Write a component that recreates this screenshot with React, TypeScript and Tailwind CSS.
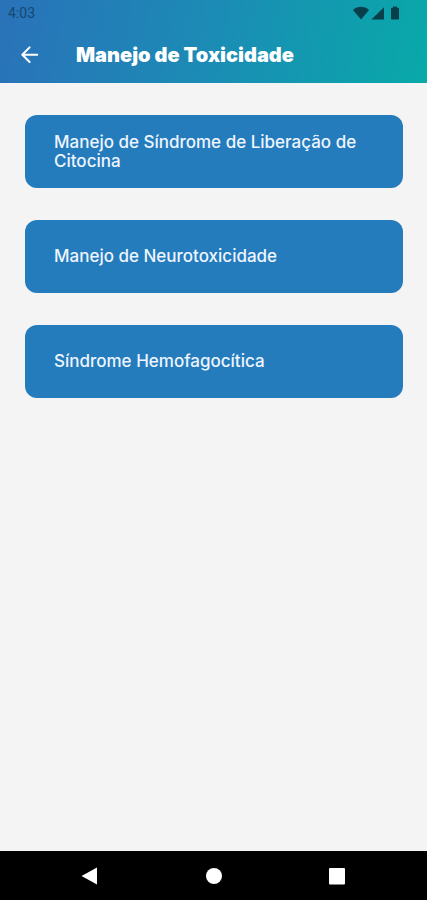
import React from 'react';

const topics = [
  'Manejo de Síndrome de Liberação de Citocina',
  'Manejo de Neurotoxicidade',
  'Síndrome Hemofagocítica',
];

const StatusBar: React.FC = () => {
  return (
    <div className="flex h-[26px] items-center justify-between pl-2 pr-[26px] text-[#083f4b]">
      <span className="font-['Roboto',sans-serif] text-sm text-[#15486f]">4:03</span>
      <div className="flex items-center gap-[2px]">
        <svg className="h-4 w-4" viewBox="0 0 16 16" fill="currentColor" aria-hidden="true">
          <path d="M0 4.9C4.6 .6 11.4 .6 16 4.9L8 14.4Z" />
        </svg>
        <svg className="h-4 w-4" viewBox="0 0 16 16" fill="currentColor" aria-hidden="true">
          <path d="M13 2.2V14.5H0.4Z" />
        </svg>
        <svg className="h-4 w-3" viewBox="0 0 12 16" fill="currentColor" aria-hidden="true">
          <path d="M4 1.5h4v1.2h1.3c.5 0 .7.3.7.7v10.4c0 .5-.2.7-.7.7H2.7c-.5 0-.7-.2-.7-.7V3.4c0-.4.2-.7.7-.7H4Z" />
        </svg>
      </div>
    </div>
  );
};

const Header: React.FC = () => {
  return (
    <header className="bg-linear-[100deg,#2a72b9,#1b8cb5_50%,#08a9a9]">
      <StatusBar />
      <div className="flex h-[57px] items-center gap-9 px-5">
        <button type="button" aria-label="Voltar" className="text-white">
          <svg
            className="h-5 w-5"
            viewBox="0 0 20 20"
            fill="none"
            stroke="currentColor"
            strokeWidth="2"
            strokeLinecap="round"
            strokeLinejoin="round"
            aria-hidden="true"
          >
            <path d="M17.2 9.7H2.4M9.6 2.4L2.3 9.7l7.3 7.3" />
          </svg>
        </button>
        <h1 className="text-xl font-black text-white">Manejo de Toxicidade</h1>
      </div>
    </header>
  );
};

interface TopicButtonProps {
  title: string;
}

const TopicButton: React.FC<TopicButtonProps> = ({ title }) => {
  return (
    <button
      type="button"
      className="flex min-h-[73px] w-full items-center rounded-xl bg-[#247cbc] px-[29px] text-left text-[17px] leading-[19px] font-medium text-[#eef5ff]"
    >
      {title}
    </button>
  );
};

const NavigationBar: React.FC = () => {
  return (
    <nav className="flex h-[49px] items-center justify-between bg-black px-20 text-white">
      <button type="button" aria-label="Retroceder">
        <svg className="h-5 w-5" viewBox="0 0 20 20" fill="currentColor" aria-hidden="true">
          <path d="M17 1.5v17L1.5 10Z" />
        </svg>
      </button>
      <button type="button" aria-label="Início">
        <svg className="h-5 w-5" viewBox="0 0 20 20" fill="currentColor" aria-hidden="true">
          <circle cx="10" cy="10" r="8" />
        </svg>
      </button>
      <button type="button" aria-label="Recentes">
        <svg className="h-5 w-5" viewBox="0 0 20 20" fill="currentColor" aria-hidden="true">
          <rect x="2" y="2" width="16" height="16.5" rx="1" />
        </svg>
      </button>
    </nav>
  );
};

const App: React.FC = () => {
  return (
    <div className="flex min-h-screen flex-col bg-[#f4f4f4] font-['Inter',sans-serif]">
      <Header />
      <main className="flex flex-1 flex-col gap-8 py-8 pr-6 pl-[25px]">
        {topics.map((title) => (
          <TopicButton key={title} title={title} />
        ))}
      </main>
      <NavigationBar />
    </div>
  );
};

export default App;
